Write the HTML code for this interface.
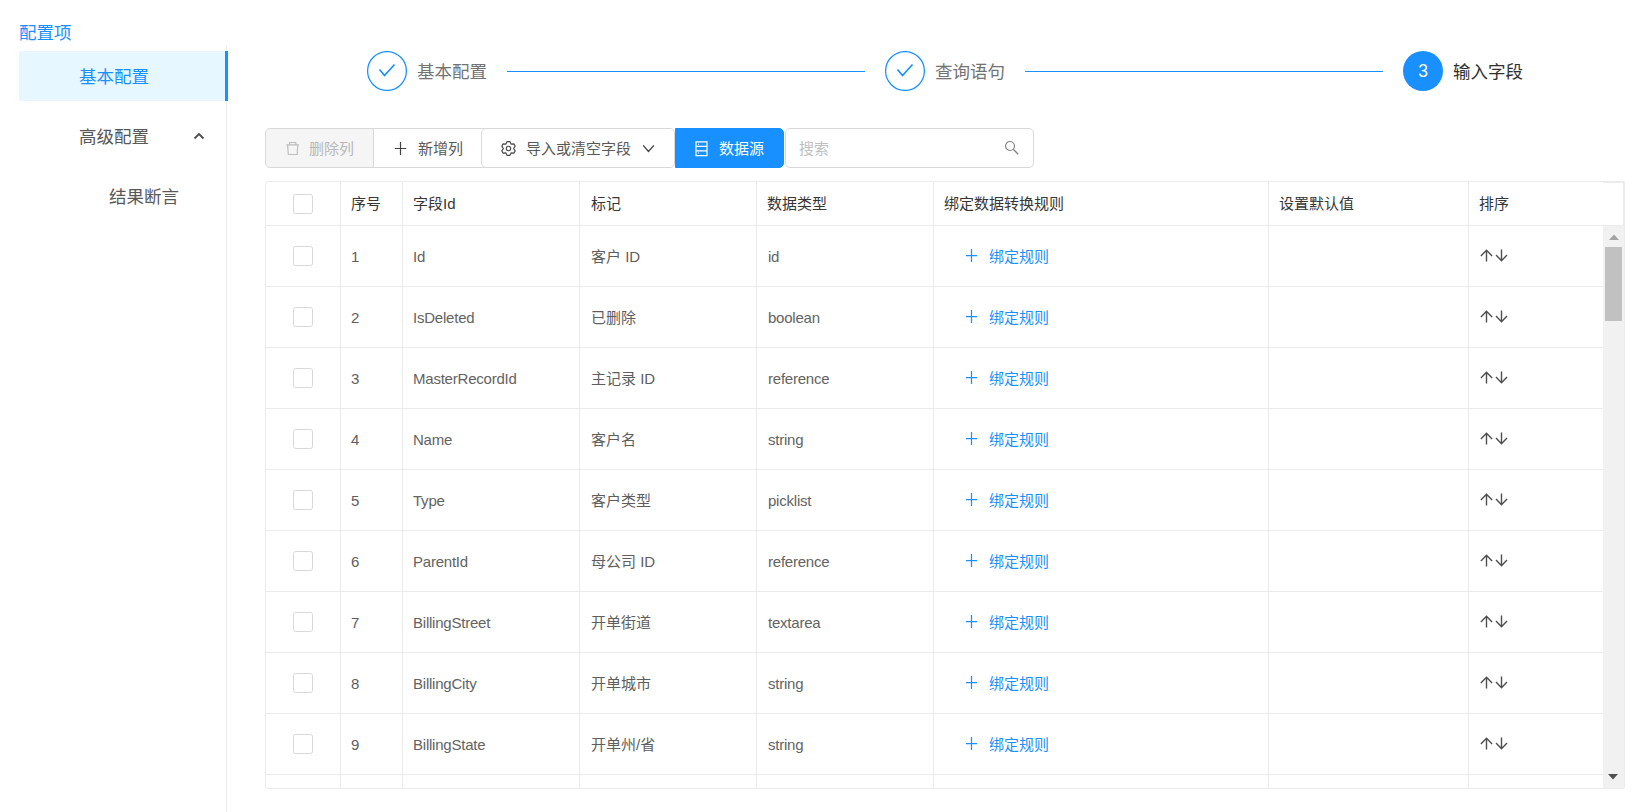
<!DOCTYPE html>
<html lang="zh-CN">
<head>
<meta charset="utf-8">
<title>配置项</title>
<style>
*{box-sizing:border-box;margin:0;padding:0}
html,body{width:1642px;height:812px;overflow:hidden;background:#fff}
body{position:relative;font-family:"Liberation Sans","Noto Sans CJK SC",sans-serif;font-size:15px;color:#595959}
.abs,.vl,.hl,.th,.td,.cb,.mi,.circle,.stitle,.sline,.btn,.ic{position:absolute}
.side-title{left:19px;top:20px;font-size:17.5px;line-height:26px;color:#1890ff}
.menu-line{left:226px;top:46px;width:1px;height:766px;background:#ebebeb}
.mi{left:19px;width:208px;height:50px;line-height:53px;font-size:17.5px;color:#585858}
.mi.sel{background:#e6f7ff;color:#1890ff;width:209px}
.mi.sel:after{content:"";position:absolute;right:0;top:0;width:3px;height:50px;background:#1890ff}
.mi span{position:absolute;left:60px;top:0}
.mi.sub span{left:90px}
.circle{width:40px;height:40px;border-radius:50%;top:51px}
.circle.fill{background:#1890ff;color:#fff;text-align:center;line-height:40px;font-size:17.5px}
.stitle{top:59px;font-size:17.5px;line-height:26px;color:#737373;white-space:nowrap}
.stitle.cur{color:#303030}
.sline{top:71px;height:1px;background:#1890ff}
.btn{top:128px;height:40px;border:1px solid #d9d9d9;background:#fff;font-size:15px;line-height:39px;color:#595959;white-space:nowrap}
.btn span{position:absolute;top:0}
.vl{width:1px;background:#ebebeb}
.hl{height:1px;background:#ebebeb}
.th{line-height:20px;font-size:15px;color:#363636;white-space:nowrap}
.td{line-height:20px;font-size:15px;color:#5e5e5e;white-space:nowrap}
.lat{letter-spacing:-0.22px;color:#636363}
.cb{left:293px;width:20px;height:20px;border:1px solid #d9d9d9;border-radius:2.5px;background:#fff}
.link{color:#1890ff}
</style>
</head>
<body>
<div class="abs side-title">配置项</div>
<div class="abs menu-line"></div>
<div class="mi sel" style="top:51px"><span>基本配置</span></div>
<div class="mi" style="top:111px"><span>高级配置</span><svg class="ic" style="left:174px;top:20px" width="12" height="10" viewBox="0 0 12 10"><path d="M1.5 7.5 L6 3 L10.5 7.5" fill="none" stroke="#4d4d4d" stroke-width="1.8"/></svg></div>
<div class="mi sub" style="top:171px"><span>结果断言</span></div>
<div class="circle" style="left:367px"><svg class="ic" style="left:0;top:0" width="40" height="40" viewBox="0 0 40 40"><circle cx="20" cy="20" r="19.4" fill="none" stroke="#1890ff" stroke-width="1.25"/><path d="M12.5 18.5 L17.5 24.5 L27.5 13.5" fill="none" stroke="#1890ff" stroke-width="1.7"/></svg></div><div class="stitle" style="left:417px">基本配置</div><div class="sline" style="left:507px;width:358px"></div>
<div class="circle" style="left:885px"><svg class="ic" style="left:0;top:0" width="40" height="40" viewBox="0 0 40 40"><circle cx="20" cy="20" r="19.4" fill="none" stroke="#1890ff" stroke-width="1.25"/><path d="M12.5 18.5 L17.5 24.5 L27.5 13.5" fill="none" stroke="#1890ff" stroke-width="1.7"/></svg></div><div class="stitle" style="left:935px">查询语句</div><div class="sline" style="left:1025px;width:358px"></div>
<div class="circle fill" style="left:1403px">3</div><div class="stitle cur" style="left:1453px">输入字段</div>
<div class="btn" style="left:265px;width:109px;background:#f5f5f5;color:#b8b8b8;border-radius:5px 0 0 5px"><svg class="ic" style="left:20px;top:12px" width="15" height="15" viewBox="0 0 15 15"><path d="M0.4 3.8H13M3.6 3.6V1.5H9.8V3.6M1.6 4L2.3 13.5H11.1L11.8 4" fill="none" stroke="#bdbdbd" stroke-width="1.2"/></svg><span style="left:43px">删除列</span></div>
<div class="btn" style="left:373px;width:113px;border-right:none"><svg class="ic" style="left:20px;top:13px" width="13" height="13" viewBox="0 0 13 13"><path d="M6.5 0V13M0.8 6.5H12.2" fill="none" stroke="#404040" stroke-width="1.2"/></svg><span style="left:44px">新增列</span></div>
<div class="btn" style="left:481px;width:194px;border-radius:5px"><svg class="ic" style="left:19px;top:12px" width="15" height="15" viewBox="0 0 15 15"><path d="M8.85 0.53 L6.15 0.53 L4.95 3.08 L2.14 2.84 L0.79 5.19 L2.40 7.50 L0.79 9.81 L2.14 12.16 L4.95 11.92 L6.15 14.47 L8.85 14.47 L10.05 11.92 L12.86 12.16 L14.21 9.81 L12.60 7.50 L14.21 5.19 L12.86 2.84 L10.05 3.08Z" fill="none" stroke="#4a4a4a" stroke-width="1.2" stroke-linejoin="round"/><circle cx="7.5" cy="7.5" r="2.2" fill="none" stroke="#4a4a4a" stroke-width="1.1"/></svg><span style="left:44px">导入或清空字段</span><svg class="ic" style="left:160px;top:15px" width="13" height="9" viewBox="0 0 13 9"><path d="M1.2 1.4L6.5 7.4L11.8 1.4" fill="none" stroke="#404040" stroke-width="1.3"/></svg></div>
<div class="btn" style="left:675px;width:109px;background:#1890ff;border-color:#1890ff;color:#fff;border-radius:0 5px 5px 0"><svg class="ic" style="left:19px;top:12px" width="14" height="16" viewBox="0 0 14 16"><path d="M1 0.8H12V14.6H1ZM1 5.4H12M1 9.8H12" fill="none" stroke="#fff" stroke-width="1.2"/><path d="M3 2.8H4V3.8H3ZM3 11.6H4V12.6H3Z" fill="#fff"/></svg><span style="left:43px">数据源</span></div>
<div class="btn" style="left:785px;width:249px;border-radius:5px;color:#bfbfbf"><span style="left:13px">搜索</span><svg class="ic" style="left:218px;top:11px" width="16" height="16" viewBox="0 0 16 16"><circle cx="6" cy="6" r="4.5" fill="none" stroke="#828282" stroke-width="1.2"/><path d="M9.3 9.3L14.2 14.2" stroke="#828282" stroke-width="1.3"/></svg></div>
<div class="abs" style="left:265px;top:181px;width:1360px;height:608px;border:1px solid #ebebeb;border-radius:3px 2px 2px 3px"></div>
<div class="abs" style="left:1603px;top:226px;width:21px;height:562px;background:#f1f1f1"></div>
<div class="abs" style="left:1623px;top:182px;width:1px;height:44px;background:#ebebeb"></div>
<div class="abs" style="left:1603px;top:182px;width:20px;height:1px;background:#ebebeb"></div>
<div class="abs" style="left:1605px;top:247px;width:17px;height:74px;background:#c1c1c1"></div>
<svg class="ic" style="left:1608.5px;top:234px" width="10" height="6" viewBox="0 0 10 6"><path d="M0 6 L5 0.5 L10 6Z" fill="#a3a3a3"/></svg>
<svg class="ic" style="left:1608.2px;top:774px" width="10" height="6" viewBox="0 0 10 6"><path d="M0 0 L5 5.5 L10 0Z" fill="#505050"/></svg>
<div class="vl" style="left:340px;top:182px;height:606px"></div>
<div class="vl" style="left:402px;top:182px;height:606px"></div>
<div class="vl" style="left:579px;top:182px;height:606px"></div>
<div class="vl" style="left:756px;top:182px;height:606px"></div>
<div class="vl" style="left:933px;top:182px;height:606px"></div>
<div class="vl" style="left:1268px;top:182px;height:606px"></div>
<div class="vl" style="left:1468px;top:182px;height:606px"></div>
<div class="hl" style="left:266px;top:225px;width:1358px"></div>
<div class="cb" style="top:194px"></div>
<div class="th" style="left:351px;top:194px">序号</div>
<div class="th" style="left:413px;top:194px">字段Id</div>
<div class="th" style="left:591px;top:194px">标记</div>
<div class="th" style="left:767px;top:194px">数据类型</div>
<div class="th" style="left:944px;top:194px">绑定数据转换规则</div>
<div class="th" style="left:1279px;top:194px">设置默认值</div>
<div class="th" style="left:1479px;top:194px">排序</div>
<div class="hl" style="left:266px;top:286px;width:1337px"></div>
<div class="cb" style="top:246px"></div>
<div class="td" style="left:351px;top:247px">1</div>
<div class="td lat" style="left:413px;top:247px">Id</div>
<div class="td" style="left:591px;top:247px">客户 ID</div>
<div class="td lat" style="left:768px;top:247px">id</div>
<div class="td link" style="left:989px;top:247px">绑定规则</div>
<svg class="ic" style="left:965px;top:249px" width="13" height="13" viewBox="0 0 13 13"><path d="M6.5 0V13M1 6.5H12" stroke="#1890ff" stroke-width="1.25" fill="none"/></svg>
<svg class="ic" style="left:1480px;top:249px" width="28" height="13" viewBox="0 0 28 13"><path d="M6.5 12.4V1.6M0.9 7L6.5 1.3L12.1 7M21.5 0.4V11.4M16 6L21.5 11.7L27 6" stroke="#4f4f4f" stroke-width="1.4" fill="none"/></svg>
<div class="hl" style="left:266px;top:347px;width:1337px"></div>
<div class="cb" style="top:307px"></div>
<div class="td" style="left:351px;top:308px">2</div>
<div class="td lat" style="left:413px;top:308px">IsDeleted</div>
<div class="td" style="left:591px;top:308px">已删除</div>
<div class="td lat" style="left:768px;top:308px">boolean</div>
<div class="td link" style="left:989px;top:308px">绑定规则</div>
<svg class="ic" style="left:965px;top:310px" width="13" height="13" viewBox="0 0 13 13"><path d="M6.5 0V13M1 6.5H12" stroke="#1890ff" stroke-width="1.25" fill="none"/></svg>
<svg class="ic" style="left:1480px;top:310px" width="28" height="13" viewBox="0 0 28 13"><path d="M6.5 12.4V1.6M0.9 7L6.5 1.3L12.1 7M21.5 0.4V11.4M16 6L21.5 11.7L27 6" stroke="#4f4f4f" stroke-width="1.4" fill="none"/></svg>
<div class="hl" style="left:266px;top:408px;width:1337px"></div>
<div class="cb" style="top:368px"></div>
<div class="td" style="left:351px;top:369px">3</div>
<div class="td lat" style="left:413px;top:369px">MasterRecordId</div>
<div class="td" style="left:591px;top:369px">主记录 ID</div>
<div class="td lat" style="left:768px;top:369px">reference</div>
<div class="td link" style="left:989px;top:369px">绑定规则</div>
<svg class="ic" style="left:965px;top:371px" width="13" height="13" viewBox="0 0 13 13"><path d="M6.5 0V13M1 6.5H12" stroke="#1890ff" stroke-width="1.25" fill="none"/></svg>
<svg class="ic" style="left:1480px;top:371px" width="28" height="13" viewBox="0 0 28 13"><path d="M6.5 12.4V1.6M0.9 7L6.5 1.3L12.1 7M21.5 0.4V11.4M16 6L21.5 11.7L27 6" stroke="#4f4f4f" stroke-width="1.4" fill="none"/></svg>
<div class="hl" style="left:266px;top:469px;width:1337px"></div>
<div class="cb" style="top:429px"></div>
<div class="td" style="left:351px;top:430px">4</div>
<div class="td lat" style="left:413px;top:430px">Name</div>
<div class="td" style="left:591px;top:430px">客户名</div>
<div class="td lat" style="left:768px;top:430px">string</div>
<div class="td link" style="left:989px;top:430px">绑定规则</div>
<svg class="ic" style="left:965px;top:432px" width="13" height="13" viewBox="0 0 13 13"><path d="M6.5 0V13M1 6.5H12" stroke="#1890ff" stroke-width="1.25" fill="none"/></svg>
<svg class="ic" style="left:1480px;top:432px" width="28" height="13" viewBox="0 0 28 13"><path d="M6.5 12.4V1.6M0.9 7L6.5 1.3L12.1 7M21.5 0.4V11.4M16 6L21.5 11.7L27 6" stroke="#4f4f4f" stroke-width="1.4" fill="none"/></svg>
<div class="hl" style="left:266px;top:530px;width:1337px"></div>
<div class="cb" style="top:490px"></div>
<div class="td" style="left:351px;top:491px">5</div>
<div class="td lat" style="left:413px;top:491px">Type</div>
<div class="td" style="left:591px;top:491px">客户类型</div>
<div class="td lat" style="left:768px;top:491px">picklist</div>
<div class="td link" style="left:989px;top:491px">绑定规则</div>
<svg class="ic" style="left:965px;top:493px" width="13" height="13" viewBox="0 0 13 13"><path d="M6.5 0V13M1 6.5H12" stroke="#1890ff" stroke-width="1.25" fill="none"/></svg>
<svg class="ic" style="left:1480px;top:493px" width="28" height="13" viewBox="0 0 28 13"><path d="M6.5 12.4V1.6M0.9 7L6.5 1.3L12.1 7M21.5 0.4V11.4M16 6L21.5 11.7L27 6" stroke="#4f4f4f" stroke-width="1.4" fill="none"/></svg>
<div class="hl" style="left:266px;top:591px;width:1337px"></div>
<div class="cb" style="top:551px"></div>
<div class="td" style="left:351px;top:552px">6</div>
<div class="td lat" style="left:413px;top:552px">ParentId</div>
<div class="td" style="left:591px;top:552px">母公司 ID</div>
<div class="td lat" style="left:768px;top:552px">reference</div>
<div class="td link" style="left:989px;top:552px">绑定规则</div>
<svg class="ic" style="left:965px;top:554px" width="13" height="13" viewBox="0 0 13 13"><path d="M6.5 0V13M1 6.5H12" stroke="#1890ff" stroke-width="1.25" fill="none"/></svg>
<svg class="ic" style="left:1480px;top:554px" width="28" height="13" viewBox="0 0 28 13"><path d="M6.5 12.4V1.6M0.9 7L6.5 1.3L12.1 7M21.5 0.4V11.4M16 6L21.5 11.7L27 6" stroke="#4f4f4f" stroke-width="1.4" fill="none"/></svg>
<div class="hl" style="left:266px;top:652px;width:1337px"></div>
<div class="cb" style="top:612px"></div>
<div class="td" style="left:351px;top:613px">7</div>
<div class="td lat" style="left:413px;top:613px">BillingStreet</div>
<div class="td" style="left:591px;top:613px">开单街道</div>
<div class="td lat" style="left:768px;top:613px">textarea</div>
<div class="td link" style="left:989px;top:613px">绑定规则</div>
<svg class="ic" style="left:965px;top:615px" width="13" height="13" viewBox="0 0 13 13"><path d="M6.5 0V13M1 6.5H12" stroke="#1890ff" stroke-width="1.25" fill="none"/></svg>
<svg class="ic" style="left:1480px;top:615px" width="28" height="13" viewBox="0 0 28 13"><path d="M6.5 12.4V1.6M0.9 7L6.5 1.3L12.1 7M21.5 0.4V11.4M16 6L21.5 11.7L27 6" stroke="#4f4f4f" stroke-width="1.4" fill="none"/></svg>
<div class="hl" style="left:266px;top:713px;width:1337px"></div>
<div class="cb" style="top:673px"></div>
<div class="td" style="left:351px;top:674px">8</div>
<div class="td lat" style="left:413px;top:674px">BillingCity</div>
<div class="td" style="left:591px;top:674px">开单城市</div>
<div class="td lat" style="left:768px;top:674px">string</div>
<div class="td link" style="left:989px;top:674px">绑定规则</div>
<svg class="ic" style="left:965px;top:676px" width="13" height="13" viewBox="0 0 13 13"><path d="M6.5 0V13M1 6.5H12" stroke="#1890ff" stroke-width="1.25" fill="none"/></svg>
<svg class="ic" style="left:1480px;top:676px" width="28" height="13" viewBox="0 0 28 13"><path d="M6.5 12.4V1.6M0.9 7L6.5 1.3L12.1 7M21.5 0.4V11.4M16 6L21.5 11.7L27 6" stroke="#4f4f4f" stroke-width="1.4" fill="none"/></svg>
<div class="hl" style="left:266px;top:774px;width:1337px"></div>
<div class="cb" style="top:734px"></div>
<div class="td" style="left:351px;top:735px">9</div>
<div class="td lat" style="left:413px;top:735px">BillingState</div>
<div class="td" style="left:591px;top:735px">开单州/省</div>
<div class="td lat" style="left:768px;top:735px">string</div>
<div class="td link" style="left:989px;top:735px">绑定规则</div>
<svg class="ic" style="left:965px;top:737px" width="13" height="13" viewBox="0 0 13 13"><path d="M6.5 0V13M1 6.5H12" stroke="#1890ff" stroke-width="1.25" fill="none"/></svg>
<svg class="ic" style="left:1480px;top:737px" width="28" height="13" viewBox="0 0 28 13"><path d="M6.5 12.4V1.6M0.9 7L6.5 1.3L12.1 7M21.5 0.4V11.4M16 6L21.5 11.7L27 6" stroke="#4f4f4f" stroke-width="1.4" fill="none"/></svg>
</body>
</html>
